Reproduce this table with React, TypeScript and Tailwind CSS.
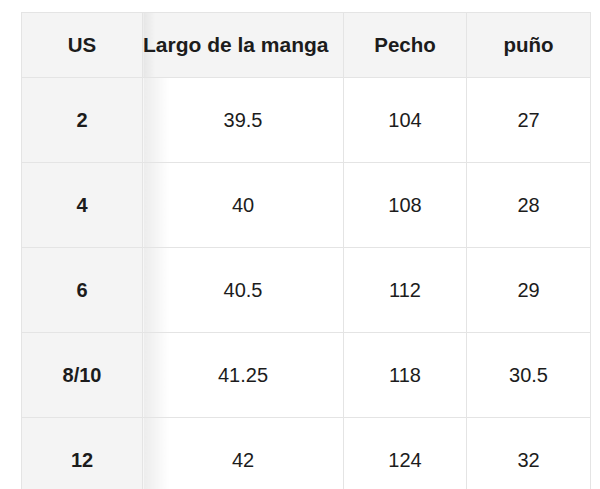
import React from "react";

const rows = [
  { us: "2", largo: "39.5", pecho: "104", puno: "27" },
  { us: "4", largo: "40", pecho: "108", puno: "28" },
  { us: "6", largo: "40.5", pecho: "112", puno: "29" },
  { us: "8/10", largo: "41.25", pecho: "118", puno: "30.5" },
  { us: "12", largo: "42", pecho: "124", puno: "32" },
];

export default function App() {
  return (
    <div className="w-[600px] h-[489px] overflow-hidden bg-white pt-[12px] pl-[21px] text-[#1c1c1c] font-['Liberation_Sans',Arial,sans-serif]">
      <table className="border-collapse table-fixed w-[569px] text-[20px]">
        <colgroup>
          <col className="w-[121px]" />
          <col className="w-[201px]" />
          <col className="w-[123px]" />
          <col className="w-[124px]" />
        </colgroup>
        <thead>
          <tr className="h-[65px] bg-[#f4f4f4] text-[20.5px]">
            <th className="border border-[#e4e4e4] font-bold text-center p-0">US</th>
            <th className="border border-[#e4e4e4] font-bold text-left p-0 whitespace-nowrap text-[21px] bg-[linear-gradient(to_right,#e6e6e6,#f4f4f4_12px)]">
              Largo de la manga
            </th>
            <th className="border border-[#e4e4e4] font-bold text-center p-0">Pecho</th>
            <th className="border border-[#e4e4e4] font-bold text-center p-0">puño</th>
          </tr>
        </thead>
        <tbody>
          {rows.map((r) => (
            <tr key={r.us} className="h-[85px]">
              <td className="border border-[#e4e4e4] bg-[#f4f4f4] font-bold text-center p-0">{r.us}</td>
              <td className="border border-[#e4e4e4] text-center p-0 bg-[linear-gradient(to_right,#ececec,#ffffff_26px)]">{r.largo}</td>
              <td className="border border-[#e4e4e4] text-center p-0">{r.pecho}</td>
              <td className="border border-[#e4e4e4] text-center p-0">{r.puno}</td>
            </tr>
          ))}
        </tbody>
      </table>
    </div>
  );
}
